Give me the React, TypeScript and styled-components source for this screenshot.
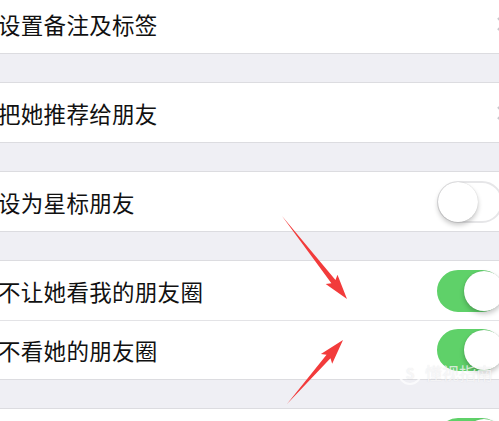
import React from 'react';
import styled, { createGlobalStyle } from 'styled-components';

const GlobalStyle = createGlobalStyle`
  html, body {
    margin: 0;
    padding: 0;
    background: #efeff4;
  }
  body {
    font-family: "Noto Sans CJK SC", "Noto Sans", sans-serif;
  }
`;

const Styled = {
  Page: styled.div`
    position: relative;
    width: 499px;
    height: 421px;
    overflow: hidden;
    background: #efeff4;
  `,
  List: styled.div`
    display: flex;
    flex-direction: column;
    gap: 28px;
    margin-top: -7px;
  `,
  Group: styled.div`
    background: #fff;
    border-top: 1px solid #dcdce0;
    border-bottom: 1px solid #dcdce0;
  `,
  Row: styled.div<{ $divider?: boolean }>`
    height: 59px;
    display: flex;
    align-items: center;
    justify-content: space-between;
    box-sizing: border-box;
    border-top: ${(p) => (p.$divider ? '1px solid #e3e3e6' : 'none')};
  `,
  Label: styled.span`
    margin-left: -2px;
    font-size: 22.5px;
    color: #111;
    letter-spacing: 0.3px;
    white-space: nowrap;
  `,
  Chevron: styled.svg`
    width: 10px;
    height: 16px;
    margin-right: -7px;
    flex: none;
  `,
  Switch: styled.div<{ $on: boolean }>`
    position: relative;
    flex: none;
    width: 66px;
    height: 42px;
    margin-right: -4px;
    box-sizing: border-box;
    border-radius: 21px;
    background: ${(p) => (p.$on ? '#5fd169' : '#fff')};
    border: 2px solid ${(p) => (p.$on ? '#5fd169' : '#e6e6e8')};
  `,
  Knob: styled.div<{ $on: boolean }>`
    position: absolute;
    top: -1px;
    left: ${(p) => (p.$on ? '25px' : '-1px')};
    width: 40px;
    height: 40px;
    border-radius: 50%;
    background: #fff;
    box-shadow: 0 3px 5px rgba(0, 0, 0, 0.22), 0 0 1px rgba(0, 0, 0, 0.2);
  `,
  Overlay: styled.svg`
    position: absolute;
    left: 0;
    top: 0;
    pointer-events: none;
  `,
  Watermark: styled.div`
    position: absolute;
    left: 398px;
    top: 360px;
    display: flex;
    align-items: center;
    gap: 3px;
    color: rgba(255, 255, 255, 0.7);
    font-size: 17px;
    text-shadow: 0 0 1px rgba(160, 160, 170, 0.3);
  `,
  Mark: styled.span`
    display: inline-flex;
    align-items: center;
    justify-content: center;
    width: 20px;
    height: 20px;
    border-radius: 50%;
    border: 2px solid rgba(255, 255, 255, 0.7);
    font-size: 14px;
    font-weight: bold;
  `
};

const Chevron = () => (
  <Styled.Chevron viewBox="0 0 10 16">
    <path d="M2 2 L8 8 L2 14" fill="none" stroke="#c7c7cc" strokeWidth="2.4" />
  </Styled.Chevron>
);

const Switch = ({ on }: { on: boolean }) => (
  <Styled.Switch $on={on}>
    <Styled.Knob $on={on} />
  </Styled.Switch>
);

// a callout arrow from tail (x1,y1) to tip (x2,y2)
const Arrow = ({ x1, y1, x2, y2 }: { x1: number; y1: number; x2: number; y2: number }) => {
  const L = Math.hypot(x2 - x1, y2 - y1);
  const angle = (Math.atan2(y2 - y1, x2 - x1) * 180) / Math.PI;
  const points = [
    [0, 0],
    [L - 22, -2.6],
    [L - 25, -7.5],
    [L, 0],
    [L - 25, 7.5],
    [L - 22, 2.6]
  ]
    .map((pt) => pt.join(','))
    .join(' ');
  return (
    <polygon
      points={points}
      fill="#f23b3b"
      transform={`translate(${x1} ${y1}) rotate(${angle})`}
    />
  );
};

const groups: { label: string; kind: 'link' | 'on' | 'off' }[][] = [
  [{ label: '设置备注及标签', kind: 'link' }],
  [{ label: '把她推荐给朋友', kind: 'link' }],
  [{ label: '设为星标朋友', kind: 'off' }],
  [
    { label: '不让她看我的朋友圈', kind: 'on' },
    { label: '不看她的朋友圈', kind: 'on' }
  ],
  [{ label: '', kind: 'on' }]
];

const App: React.FC = () => {
  return (
    <Styled.Page>
      <GlobalStyle />
      <Styled.List>
        {groups.map((items, gi) => (
          <Styled.Group key={gi}>
            {items.map((item, i) => (
              <Styled.Row key={i} $divider={i > 0}>
                <Styled.Label>{item.label}</Styled.Label>
                {item.kind === 'link' ? <Chevron /> : <Switch on={item.kind === 'on'} />}
              </Styled.Row>
            ))}
          </Styled.Group>
        ))}
      </Styled.List>
      <Styled.Watermark>
        <Styled.Mark>S</Styled.Mark>
        懂视指南
      </Styled.Watermark>
      <Styled.Overlay width="499" height="421">
        <Arrow x1={282} y1={216} x2={347} y2={299} />
        <Arrow x1={287} y1={404} x2={343} y2={340} />
      </Styled.Overlay>
    </Styled.Page>
  );
};

export default App;
